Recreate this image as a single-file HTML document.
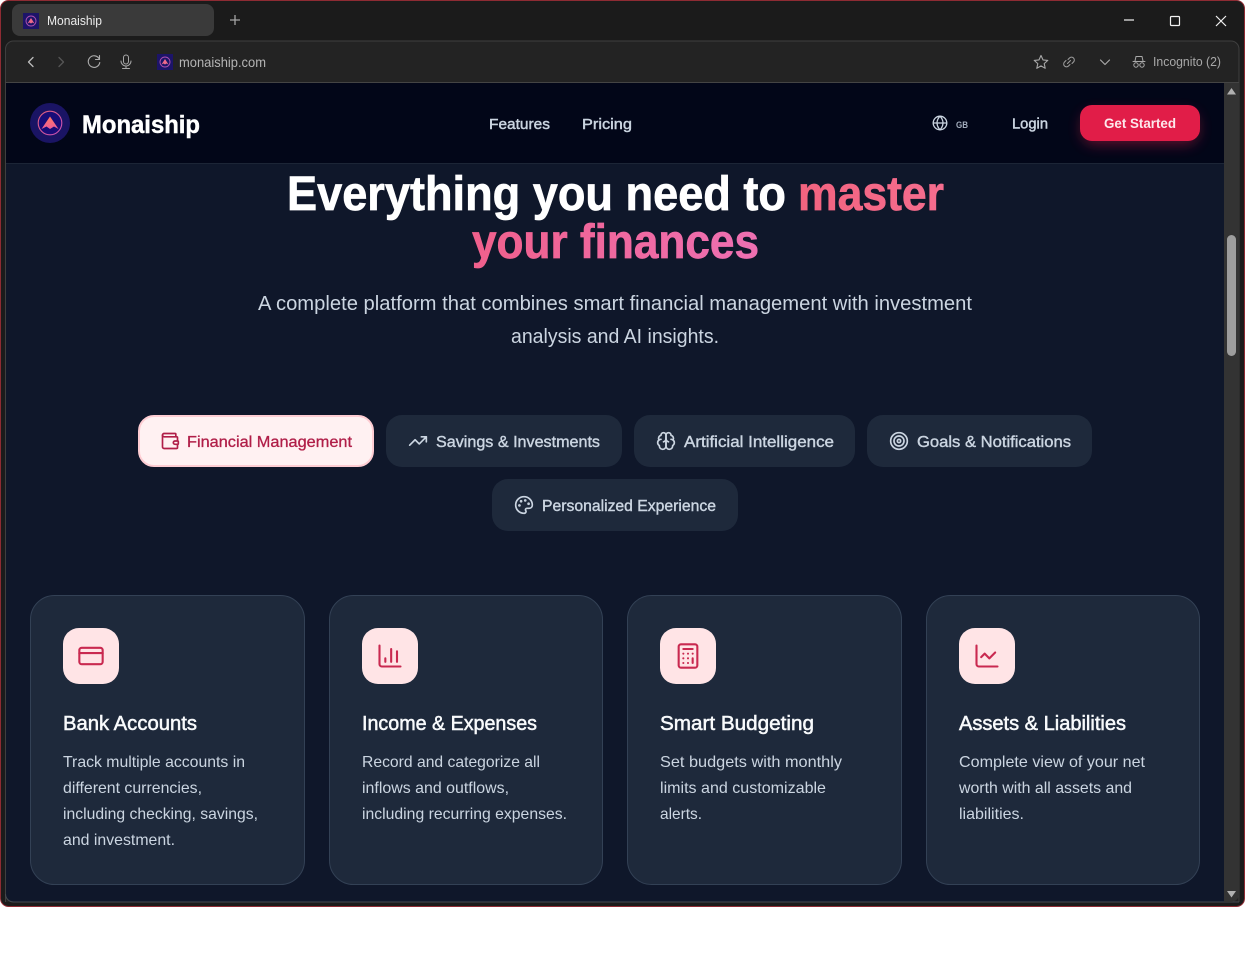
<!DOCTYPE html>
<html lang="en"><head><meta charset="utf-8"><title>Monaiship</title>
<style>
html,body{margin:0;padding:0;background:#fff;width:1245px;height:971px;overflow:hidden}
svg{display:block}
text{font-family:"Liberation Sans",Arial,sans-serif;white-space:pre}
.i{fill:none;stroke-linecap:round;stroke-linejoin:round}
</style></head><body>
<svg width="1245" height="971" viewBox="0 0 1245 971" xmlns="http://www.w3.org/2000/svg">
<defs>
<linearGradient id="gy" gradientUnits="userSpaceOnUse" x1="472" y1="0" x2="759" y2="0"><stop offset="0" stop-color="#f0608c"/><stop offset="1" stop-color="#ee70b2"/></linearGradient>
<linearGradient id="gm" gradientUnits="userSpaceOnUse" x1="798" y1="0" x2="944" y2="0"><stop offset="0" stop-color="#f2637f"/><stop offset="1" stop-color="#f56d8e"/></linearGradient>
<linearGradient id="lg" x1="0" y1="0" x2="1" y2="1"><stop offset="0" stop-color="#e0607a"/><stop offset="1" stop-color="#c850b8"/></linearGradient>
<linearGradient id="mt" x1="0" y1="0" x2="0" y2="1"><stop offset="0" stop-color="#ff7a62"/><stop offset="1" stop-color="#ee5a9a"/></linearGradient>
<filter id="bs" x="-30%" y="-60%" width="160%" height="240%"><feGaussianBlur stdDeviation="7"/></filter>
</defs>

<!-- window frame -->
<rect x="0.5" y="0.5" width="1244" height="906" rx="8" fill="#1b1b1b" stroke="#8e2b33"/>
<rect x="12" y="4" width="202" height="32" rx="8" fill="#3a3a3a"/>
<g>
<rect x="23" y="13" width="16" height="16" fill="#1c1468"/>
<circle cx="31" cy="21" r="5" fill="none" stroke="#b050b0" stroke-width=".9"/>
<path d="M27.5 23.5 31 18l3.5 5.5-2-1-1.500 1-1.500-1z" fill="#f06a8a"/>
</g>
<text x="47" y="25" font-size="13" fill="#ececec" textLength="55" lengthAdjust="spacingAndGlyphs">Monaiship</text>
<path d="M235 15v10M230 20h10" stroke="#a5a5a5" stroke-width="1.300" fill="none"/>
<path d="M1124 20h10" stroke="#f2f2f2" stroke-width="1.200"/>
<rect x="1170.500" y="16.500" width="9" height="9" rx="1" fill="none" stroke="#f2f2f2" stroke-width="1.200"/>
<path d="M1216 16l10 10M1226 16l-10 10" stroke="#f2f2f2" stroke-width="1.200"/>

<!-- toolbar -->
<path d="M5.500 902V49a8 8 0 0 1 8-8H1231a8 8 0 0 1 8 8V902" fill="#232323" stroke="#3f3f3f"/>
<path d="M33 57.500l-4.500 4.500 4.500 4.500" class="i" stroke="#bdbdbd" stroke-width="1.300"/>
<path d="M59 57.500l4.500 4.500-4.500 4.500" class="i" stroke="#565656" stroke-width="1.300"/>
<path d="M99 58.500a5.800 5.800 0 1 0 .8 4M99.500 55.500v4h-4" class="i" stroke="#adadad" stroke-width="1.100"/>
<rect x="123.500" y="55" width="5" height="9" rx="2.500" class="i" stroke="#a8a8a8" stroke-width="1"/>
<path d="M121 61a5 5 0 0 0 10 0M126 66v2M122.500 68.500h7" class="i" stroke="#a8a8a8" stroke-width="1"/>
<g>
<rect x="157" y="54" width="16" height="16" fill="#1c1468"/>
<circle cx="165" cy="62" r="5" fill="none" stroke="#b050b0" stroke-width=".9"/>
<path d="M161.500 64.500 165 59l3.500 5.500-2-1-1.500 1-1.500-1z" fill="#f06a8a"/>
</g>
<text x="179" y="67" font-size="14" fill="#b4b4b4" textLength="87" lengthAdjust="spacingAndGlyphs">monaiship.com</text>
<path d="M1041 55.500l2 4.400 4.800.5-3.600 3.200 1 4.700-4.200-2.400-4.200 2.400 1-4.700-3.600-3.200 4.800-.5z" class="i" stroke="#a8a8a8" stroke-width="1.100"/>
<path d="M1067.500 63.500l3-3M1066 60.500l-1.500 1.500a2.800 2.800 0 0 0 4 4l1.500-1.500M1072 63.500l1.500-1.500a2.800 2.800 0 0 0-4-4l-1.500 1.500" class="i" stroke="#a0a0a0" stroke-width="1"/>
<path d="M1100.500 60l4.500 4.500 4.500-4.500" class="i" stroke="#a8a8a8" stroke-width="1.200"/>
<path d="M1133 61.500h12M1135 61l1-4.500h6l1 4.500" class="i" stroke="#a8a8a8" stroke-width="1"/>
<circle cx="1136" cy="65" r="2.200" fill="none" stroke="#a8a8a8" stroke-width="1"/>
<circle cx="1142" cy="65" r="2.200" fill="none" stroke="#a8a8a8" stroke-width="1"/>
<text x="1153" y="66" font-size="12.500" fill="#a8a8a8" textLength="68" lengthAdjust="spacingAndGlyphs">Incognito (2)</text>
<path d="M5.500 82.500H1239" stroke="#444" stroke-width="1"/>

<!-- page -->
<path d="M6 83H1224V902H14a8 8 0 0 1-8-8z" fill="#0f172a"/>
<path d="M6 83H1224V163.500H6z" fill="#020618"/>
<path d="M6 163.500H1224" stroke="#1c2536" stroke-width="1"/>
<path d="M5.500 894a8 8 0 0 0 8 8H1239" fill="none" stroke="#454a50" stroke-width="1"/>

<!-- scrollbar -->
<path d="M1224 83h15v811a8 8 0 0 1-8 8h-7z" fill="#333"/>
<rect x="1227" y="235" width="9" height="121" rx="4.500" fill="#9d9d9d"/>
<path d="M1231.500 88l-4.500 6.500h9z" fill="#b0b0b0"/>
<path d="M1231.500 897.500l-4.500-6.500h9z" fill="#b0b0b0"/>

<!-- header -->
<circle cx="50" cy="123" r="20" fill="#1a1464"/>
<circle cx="50" cy="123" r="11.800" fill="#180c78" stroke="url(#lg)" stroke-width="1.100"/>
<path d="M41.500 129 50 116.500l8.500 12.500-4.500-2.500-4 2.500-3.500-2.500z" fill="url(#mt)"/>
<text x="82" y="133" font-size="25" font-weight="700" fill="#fff" stroke="#fff" stroke-width=".45" textLength="118" lengthAdjust="spacingAndGlyphs">Monaiship</text>
<g font-size="15" fill="#cbd5e1" stroke="#cbd5e1" stroke-width=".45">
<text x="489" y="129" textLength="61" lengthAdjust="spacingAndGlyphs">Features</text>
<text x="582" y="129" textLength="50" lengthAdjust="spacingAndGlyphs">Pricing</text>
<text x="1012" y="128.500" textLength="36" lengthAdjust="spacingAndGlyphs">Login</text>
</g>
<g class="i" stroke="#cbd5e1" stroke-width="1.300"><circle cx="940" cy="123" r="6.800"/><path d="M933.200 123h13.600M940 116.200c-4 4.200-4 9.400 0 13.600c4-4.200 4-9.400 0-13.600"/></g>
<text x="956" y="128" font-size="9" font-weight="700" fill="#a3adbd" textLength="12" lengthAdjust="spacingAndGlyphs">GB</text>
<rect x="1082" y="112" width="116" height="32" rx="12" fill="#e11d48" opacity=".45" filter="url(#bs)"/>
<rect x="1080" y="105" width="120" height="36" rx="12" fill="#e11d48"/>
<text x="1104" y="128" font-size="14" font-weight="700" fill="#fde8ec" textLength="72" lengthAdjust="spacingAndGlyphs">Get Started</text>

<!-- hero -->
<g font-size="48" font-weight="700" stroke-width=".7">
<text x="287" y="210" fill="#fff" stroke="#fff" textLength="499" lengthAdjust="spacingAndGlyphs">Everything you need to</text>
<text x="798" y="210" fill="url(#gm)" stroke="url(#gm)" textLength="146" lengthAdjust="spacingAndGlyphs">master</text>
<text x="472" y="258" fill="url(#gy)" stroke="url(#gy)" textLength="287" lengthAdjust="spacingAndGlyphs">your finances</text>
</g>
<g font-size="20" fill="#cbd5e1">
<text x="258" y="310" textLength="714" lengthAdjust="spacingAndGlyphs">A complete platform that combines smart financial management with investment</text>
<text x="511" y="343" textLength="208" lengthAdjust="spacingAndGlyphs">analysis and AI insights.</text>
</g>

<!-- tabs -->
<rect x="139" y="416" width="234" height="50" rx="15" fill="#fff1f2" stroke="#fecdd3" stroke-width="2"/>
<g fill="#1e293b">
<rect x="386" y="415" width="236" height="52" rx="16"/>
<rect x="634" y="415" width="221" height="52" rx="16"/>
<rect x="867" y="415" width="225" height="52" rx="16"/>
<rect x="492" y="479" width="246" height="52" rx="16"/>
</g>
<text x="187" y="447" font-size="16" fill="#b01e48" stroke="#b01e48" stroke-width=".3" textLength="165" lengthAdjust="spacingAndGlyphs">Financial Management</text>
<g font-size="16" fill="#cbd5e1" stroke="#cbd5e1" stroke-width=".4">
<text x="436" y="447" textLength="164" lengthAdjust="spacingAndGlyphs">Savings &amp; Investments</text>
<text x="684" y="447" textLength="150" lengthAdjust="spacingAndGlyphs">Artificial Intelligence</text>
<text x="917" y="447" textLength="154" lengthAdjust="spacingAndGlyphs">Goals &amp; Notifications</text>
<text x="542" y="511" textLength="174" lengthAdjust="spacingAndGlyphs">Personalized Experience</text>
</g>
<svg x="160" y="431" width="20" height="20" viewBox="0 0 24 24" class="i" stroke="#b01e48" stroke-width="2"><path d="M19 7V4a1 1 0 0 0-1-1H5a2 2 0 0 0 0 4h15a1 1 0 0 1 1 1v4h-3a2 2 0 0 0 0 4h3a1 1 0 0 0 1-1v-2a1 1 0 0 0-1-1"/><path d="M3 5v14a2 2 0 0 0 2 2h15a1 1 0 0 0 1-1v-4"/></svg>
<svg x="408" y="431" width="20" height="20" viewBox="0 0 24 24" class="i" stroke="#cbd5e1" stroke-width="2"><path d="M22 7l-8.500 8.500-5-5L2 17"/><path d="M16 7h6v6"/></svg>
<svg x="656" y="431" width="20" height="20" viewBox="0 0 24 24" class="i" stroke="#cbd5e1" stroke-width="2"><path d="M12 5a3 3 0 1 0-5.997.125 4 4 0 0 0-2.526 5.770 4 4 0 0 0 .556 6.588A4 4 0 1 0 12 18z"/><path d="M12 5a3 3 0 1 1 5.997.125 4 4 0 0 1 2.526 5.770 4 4 0 0 1-.556 6.588A4 4 0 1 1 12 18z"/><path d="M15 13a4.500 4.500 0 0 1-3-4 4.500 4.500 0 0 1-3 4"/><path d="M3.500 10.900A4 4 0 0 1 6 10M20.500 10.900A4 4 0 0 0 18 10"/></svg>
<svg x="889" y="431" width="20" height="20" viewBox="0 0 24 24" class="i" stroke="#cbd5e1" stroke-width="2"><circle cx="12" cy="12" r="10"/><circle cx="12" cy="12" r="6"/><circle cx="12" cy="12" r="2"/></svg>
<svg x="514" y="495" width="20" height="20" viewBox="0 0 24 24" class="i" stroke="#cbd5e1" stroke-width="2"><path d="M12 22a10 10 0 1 1 10-10c0 2.800-2.200 4-4 4h-2.500a1.800 1.800 0 0 0-1.300 3c.5.600.3 3-2.200 3z"/><circle cx="13.500" cy="6.500" r=".6" fill="#cbd5e1"/><circle cx="17.500" cy="10.500" r=".6" fill="#cbd5e1"/><circle cx="6.500" cy="12.500" r=".6" fill="#cbd5e1"/><circle cx="8.500" cy="7.500" r=".6" fill="#cbd5e1"/></svg>

<!-- cards -->
<g fill="#1e293b" stroke="#334155" stroke-width="1">
<rect x="30.500" y="595.500" width="274" height="289" rx="24"/>
<rect x="329.500" y="595.500" width="273" height="289" rx="24"/>
<rect x="627.500" y="595.500" width="274" height="289" rx="24"/>
<rect x="926.500" y="595.500" width="273" height="289" rx="24"/>
</g>
<g fill="#ffe4e6">
<rect x="63" y="628" width="56" height="56" rx="16"/>
<rect x="362" y="628" width="56" height="56" rx="16"/>
<rect x="660" y="628" width="56" height="56" rx="16"/>
<rect x="959" y="628" width="56" height="56" rx="16"/>
</g>
<svg x="77" y="642" width="28" height="28" viewBox="0 0 24 24" class="i" stroke="#c92950" stroke-width="1.800"><rect x="2" y="5" width="20" height="14" rx="2"/><path d="M2 9.500h20"/></svg>
<svg x="376" y="642" width="28" height="28" viewBox="0 0 24 24" class="i" stroke="#c92950" stroke-width="1.800"><path d="M3 3v16a2 2 0 0 0 2 2h16"/><path d="M18 17V8M13 17V6M8 17v-3"/></svg>
<svg x="674" y="642" width="28" height="28" viewBox="0 0 24 24" class="i" stroke="#c92950" stroke-width="1.800"><rect x="4" y="2" width="16" height="20" rx="2"/><path d="M8 6h8M16 14v4M16 10h.01M12 10h.01M8 10h.01M12 14h.01M8 14h.01M12 18h.01M8 18h.01"/></svg>
<svg x="973" y="642" width="28" height="28" viewBox="0 0 24 24" class="i" stroke="#c92950" stroke-width="1.800"><path d="M3 3v16a2 2 0 0 0 2 2h16"/><path d="m19 9-5 5-4-4-3 3"/></svg>

<g font-size="20" fill="#f8fafc" stroke="#f8fafc" stroke-width=".5">
<text x="63" y="730" textLength="134" lengthAdjust="spacingAndGlyphs">Bank Accounts</text>
<text x="362" y="730" textLength="175" lengthAdjust="spacingAndGlyphs">Income &amp; Expenses</text>
<text x="660" y="730" textLength="154" lengthAdjust="spacingAndGlyphs">Smart Budgeting</text>
<text x="959" y="730" textLength="167" lengthAdjust="spacingAndGlyphs">Assets &amp; Liabilities</text>
</g>
<g font-size="16" fill="#cbd5e1">
<text x="63" y="767" textLength="182" lengthAdjust="spacingAndGlyphs">Track multiple accounts in</text>
<text x="63" y="793" textLength="139" lengthAdjust="spacingAndGlyphs">different currencies,</text>
<text x="63" y="819" textLength="195" lengthAdjust="spacingAndGlyphs">including checking, savings,</text>
<text x="63" y="845" textLength="112" lengthAdjust="spacingAndGlyphs">and investment.</text>
<text x="362" y="767" textLength="178" lengthAdjust="spacingAndGlyphs">Record and categorize all</text>
<text x="362" y="793" textLength="147" lengthAdjust="spacingAndGlyphs">inflows and outflows,</text>
<text x="362" y="819" textLength="205" lengthAdjust="spacingAndGlyphs">including recurring expenses.</text>
<text x="660" y="767" textLength="182" lengthAdjust="spacingAndGlyphs">Set budgets with monthly</text>
<text x="660" y="793" textLength="166" lengthAdjust="spacingAndGlyphs">limits and customizable</text>
<text x="660" y="819" textLength="42" lengthAdjust="spacingAndGlyphs">alerts.</text>
<text x="959" y="767" textLength="186" lengthAdjust="spacingAndGlyphs">Complete view of your net</text>
<text x="959" y="793" textLength="173" lengthAdjust="spacingAndGlyphs">worth with all assets and</text>
<text x="959" y="819" textLength="65" lengthAdjust="spacingAndGlyphs">liabilities.</text>
</g>
</svg>
</body></html>
